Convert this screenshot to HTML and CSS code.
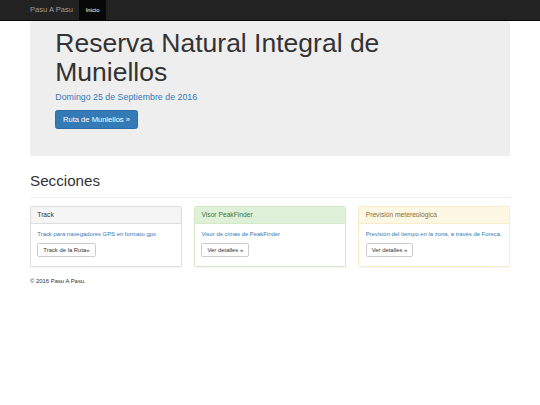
FILE: index.html
```html
<!DOCTYPE html>
<html lang="es">
<head>
    <meta charset="UTF-8">
    <meta name="viewport" content="width=device-width, initial-scale=1.0">
    <title>Pasu A Pasu</title>
    <link rel="stylesheet" href="styles.css">
</head>
<body>
    <nav class="navbar">
        <div class="container nav-inner">
            <a class="brand" href="#">Pasu A Pasu</a>
            <a class="nav-link active" href="#">Inicio</a>
        </div>
    </nav>

    <div class="container">
        <div class="jumbotron">
            <h1>Reserva Natural Integral de Muniellos</h1>
            <p class="date">Domingo 25 de Septiembre de 2016</p>
            <p class="actions"><a class="btn btn-primary" href="#">Ruta de Muniellos &raquo;</a></p>
        </div>
    </div>

    <div class="container">
        <h2 class="page-header">Secciones</h2>
        <div class="sections">
            <div class="panel panel-default">
                <div class="panel-heading">Track</div>
                <div class="panel-body">
                    <p>Track para navegadores GPS en formato gpx</p>
                    <a class="btn btn-default" href="#">Track de la Ruta&raquo;</a>
                </div>
            </div>
            <div class="panel panel-success">
                <div class="panel-heading">Visor PeakFinder</div>
                <div class="panel-body">
                    <p>Visor de cimas de PeakFinder</p>
                    <a class="btn btn-default" href="#">Ver detalles &raquo;</a>
                </div>
            </div>
            <div class="panel panel-warning">
                <div class="panel-heading">Previsión metereológica</div>
                <div class="panel-body">
                    <p>Previsión del tiempo en la zona, a través de Foreca.</p>
                    <a class="btn btn-default" href="#">Ver detalles &raquo;</a>
                </div>
            </div>
        </div>
        <footer class="footer">
            <p>&copy; 2016 Pasu A Pasu.</p>
        </footer>
    </div>
</body>
</html>
```

FILE: styles.css
```css
body {
    font-family: "Liberation Sans", Arial, sans-serif;
    font-size: 5.9px;
    line-height: 1.42857;
    color: #333;
    background-color: #fff;
    margin: 0;
}
a {
    text-decoration: none;
}
.container {
    width: 492.6px;
    margin: 0 auto;
    padding: 0 6.3px;
    box-sizing: border-box;
}
.navbar {
    height: 21px;
    background-color: #222;
    border-bottom: 1px solid #080808;
    box-sizing: border-box;
}
.nav-inner {
    display: flex;
    height: 100%;
}
.brand {
    margin-left: -6.3px;
    padding: 0 6.3px;
    font-size: 7.6px;
    line-height: 20px;
    color: #9d9d9d;
}
.nav-link {
    padding: 0 6.3px;
    line-height: 20px;
    color: #9d9d9d;
}
.nav-link.active {
    color: #fff;
    background-color: #080808;
}
.jumbotron {
    background-color: #eee;
    border-radius: 2.5px;
    padding: 7.6px 25.3px 20.2px;
    margin-bottom: 16.8px;
}
.jumbotron h1 {
    font-size: 26.5px;
    font-weight: normal;
    line-height: 1.1;
    margin: 0 0 4.2px;
}
.jumbotron p {
    margin: 0 0 6.3px;
}
.date {
    font-size: 8.84px;
    color: #337ab7;
}
.actions {
    line-height: 0;
}
.btn {
    display: inline-block;
    border: 1px solid transparent;
    white-space: nowrap;
}
.btn-primary {
    padding: 3.6px 6.7px;
    font-size: 7.58px;
    line-height: 1.3333;
    border-radius: 2.5px;
    color: #fff;
    background-color: #337ab7;
    border-color: #2e6da4;
}
.btn-default {
    padding: 2px 5px;
    font-size: 5.9px;
    line-height: 8.4px;
    border-radius: 1.7px;
    color: #333;
    background-color: #fff;
    border-color: #ccc;
}
.page-header {
    font-size: 15.2px;
    font-weight: normal;
    line-height: 1.1;
    margin: 0 0 8.4px;
    padding-bottom: 7.5px;
    border-bottom: 1px solid #eee;
}
.sections {
    display: grid;
    grid-template-columns: repeat(3, 1fr);
    gap: 12.6px;
}
.panel {
    border: 1px solid #ddd;
    border-radius: 1.7px;
    background-color: #fff;
    box-shadow: 0 0.5px 1px rgba(0, 0, 0, 0.05);
}
.panel-heading {
    padding: 4.2px 6.3px;
    font-size: 6.7px;
    line-height: 1.1;
    border-bottom: 1px solid #ddd;
    border-radius: 1.7px 1.7px 0 0;
}
.panel-body {
    padding: 6.3px 6.3px 8.6px;
}
.panel-body p {
    margin: 0 0 4.2px;
    color: #337ab7;
    line-height: 8.4px;
}
.panel-default .panel-heading {
    background-color: #f5f5f5;
    color: #333;
}
.panel-success {
    border-color: #d6e9c6;
}
.panel-success .panel-heading {
    background-color: #dff0d8;
    border-color: #d6e9c6;
    color: #3c763d;
}
.panel-warning {
    border-color: #faebcc;
}
.panel-warning .panel-heading {
    background-color: #fcf8e3;
    border-color: #faebcc;
    color: #8a6d3b;
}
.footer p {
    margin: 10px 0 0;
}
```
